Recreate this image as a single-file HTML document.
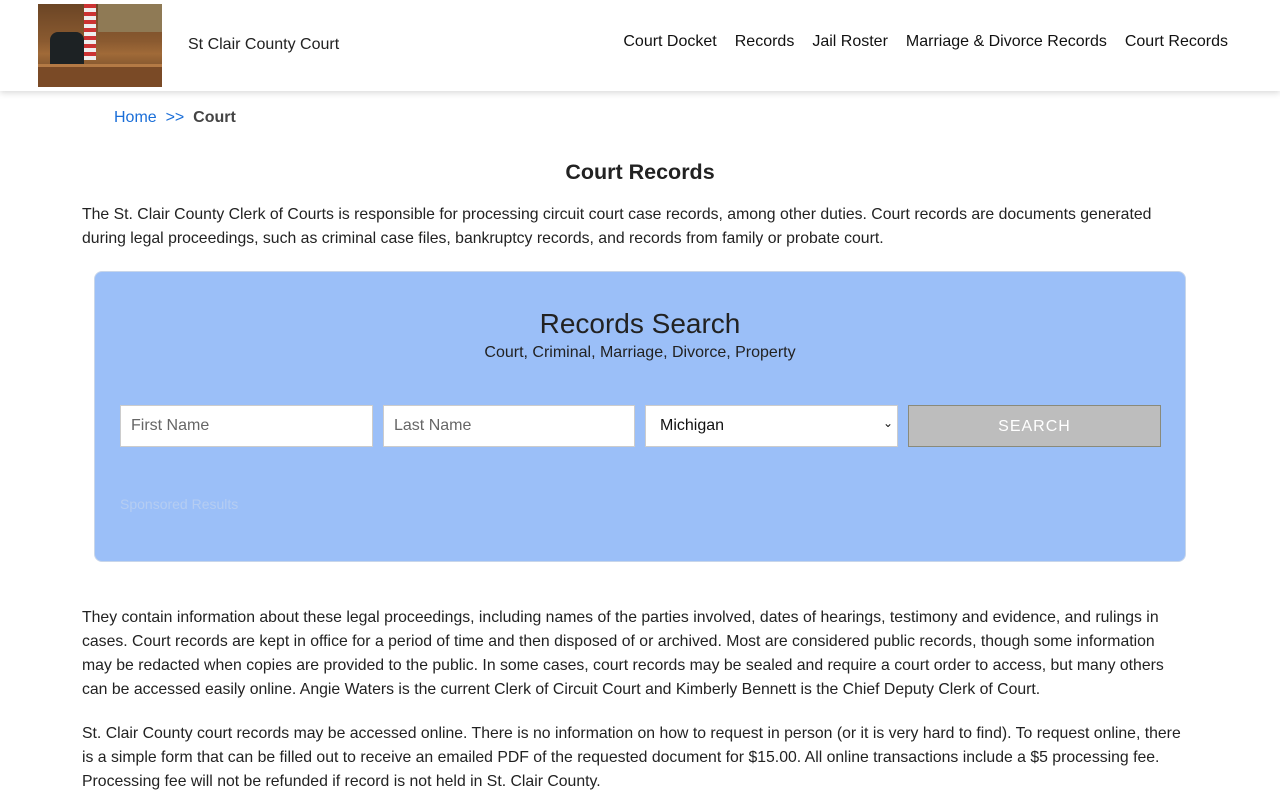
<!DOCTYPE html>
<html><head><meta charset="utf-8"><style>
*{box-sizing:border-box;margin:0;padding:0}
body{width:1280px;height:800px;overflow:hidden;background:#fff;font-family:"Liberation Sans",Arial,sans-serif;color:#222}
.hdr{position:absolute;left:0;top:0;width:1280px;height:91px;background:#fff;box-shadow:0 2px 6px rgba(0,0,0,.15)}
.logo{position:absolute;left:38px;top:4px;width:124px;height:83px;background:linear-gradient(180deg,#6b4525 0%,#8a5a30 45%,#a06a38 60%,#5a3a20 100%);overflow:hidden}
.logo .w{position:absolute;left:60px;top:0;width:64px;height:28px;background:#8f7a55}
.logo .c{position:absolute;left:12px;top:28px;width:34px;height:34px;background:#1d2224;border-radius:8px 8px 2px 2px}
.logo .f{position:absolute;left:46px;top:0;width:12px;height:56px;background:repeating-linear-gradient(180deg,#c33 0 4px,#eee 4px 8px)}
.logo .d{position:absolute;left:0;top:60px;width:124px;height:23px;background:#7a4a26;border-top:3px solid #b47a45}
.site{position:absolute;left:188px;top:36px;font-size:16px;color:#222}
.nav{position:absolute;right:52px;top:33px;font-size:16px;color:#111}
.nav span{margin-left:18px}
.bc{position:absolute;left:114px;top:109px;font-size:16px}
.bc a{color:#1a6ed8;text-decoration:none}
h1{position:absolute;left:0;width:1280px;top:160px;text-align:center;font-size:21.5px;font-weight:bold;color:#222}
p{position:absolute;left:82px;width:1100px;font-size:15.8px;line-height:24px;color:#222}
.box{position:absolute;left:94px;top:271px;width:1092px;height:291px;background:#9bbff8;border:1px solid #c8d6ea;border-radius:8px}
.box h2{position:absolute;top:36px;width:100%;text-align:center;font-weight:normal;font-size:28px;color:#222}
.box .sub{position:absolute;top:72px;width:100%;text-align:center;font-size:16px;color:#222}
.in{position:absolute;top:133px;height:42px;background:#fff;border:1px solid #ccc;font-size:16px;color:#666;padding:11px 10px}
.btn{position:absolute;left:813px;top:133px;width:253px;height:42px;background:#bdbdbd;border:1px solid #8a8a7a;color:#fff;font-size:16px;text-align:center;line-height:42px;letter-spacing:1px}
.sp{position:absolute;left:25px;top:224px;font-size:14px;color:#b5cdf2}
</style></head><body>
<div class="hdr">
<div class="logo"><div class="w"></div><div class="f"></div><div class="c"></div><div class="d"></div></div>
<div class="site">St Clair County Court</div>
<div class="nav"><span>Court Docket</span><span>Records</span><span>Jail Roster</span><span>Marriage &amp; Divorce Records</span><span>Court Records</span></div>
</div>
<div class="bc"><a>Home</a>&nbsp; <a>&gt;&gt;</a>&nbsp; <b style="color:#444">Court</b></div>
<h1>Court Records</h1>
<p style="top:203px">The St. Clair County Clerk of Courts is responsible for processing circuit court case records, among other duties. Court records are documents generated during legal proceedings, such as criminal case files, bankruptcy records, and records from family or probate court.</p>
<div class="box">
<h2>Records Search</h2>
<div class="sub">Court, Criminal, Marriage, Divorce, Property</div>
<div class="in" style="left:25px;width:253px">First Name</div>
<div class="in" style="left:288px;width:252px">Last Name</div>
<div class="in" style="left:550px;width:253px;color:#111;padding-left:14px">Michigan<span style="position:absolute;right:4px;top:10px;font-size:12px">&#8964;</span></div>
<div class="btn">SEARCH</div>
<div class="sp">Sponsored Results</div>
</div>
<p style="top:606px">They contain information about these legal proceedings, including names of the parties involved, dates of hearings, testimony and evidence, and rulings in cases. Court records are kept in office for a period of time and then disposed of or archived. Most are considered public records, though some information may be redacted when copies are provided to the public. In some cases, court records may be sealed and require a court order to access, but many others can be accessed easily online. Angie Waters is the current Clerk of Circuit Court and Kimberly Bennett is the Chief Deputy Clerk of Court.</p>
<p style="top:722px">St. Clair County court records may be accessed online. There is no information on how to request in person (or it is very hard to find). To request online, there is a simple form that can be filled out to receive an emailed PDF of the requested document for $15.00. All online transactions include a $5 processing fee. Processing fee will not be refunded if record is not held in St. Clair County.</p>
</body></html>
